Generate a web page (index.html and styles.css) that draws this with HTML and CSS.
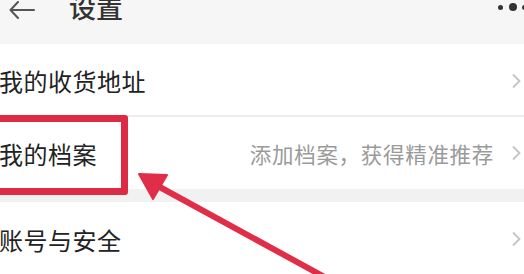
FILE: index.html
```html
<!DOCTYPE html>
<html lang="zh-CN">
<head>
    <meta charset="UTF-8">
    <meta name="viewport" content="width=device-width, initial-scale=1.0">
    <title>设置</title>
    <link rel="stylesheet" href="styles.css">
</head>
<body>
    <!-- top bar -->
    <div class="top-bar">
        <svg class="back" width="26" height="18" viewBox="0 0 26 18">
            <polyline points="9,1 1.5,9 9,17" fill="none" stroke="#555" stroke-width="2" stroke-linecap="round" stroke-linejoin="round"/>
            <line x1="2" y1="9" x2="25" y2="9" stroke="#555" stroke-width="2" stroke-linecap="round"/>
        </svg>
        <div class="title">设置</div>
        <div class="more">
            <span class="dot small"></span>
            <span class="dot big"></span>
            <span class="dot small"></span>
        </div>
    </div>

    <div class="list">
        <div class="row row-first">
            <div class="label">我的收货地址</div>
            <div class="right">
                <svg class="chev" width="10" height="16" viewBox="0 0 10 16"><polyline points="2,1.5 8.5,8 2,14.5" fill="none" stroke="#c4c4c4" stroke-width="1.8"/></svg>
            </div>
        </div>
        <div class="row row-second">
            <div class="label">我的档案</div>
            <div class="right">
                <span class="hint">添加档案，获得精准推荐</span>
                <svg class="chev" width="10" height="16" viewBox="0 0 10 16"><polyline points="2,1.5 8.5,8 2,14.5" fill="none" stroke="#c4c4c4" stroke-width="1.8"/></svg>
            </div>
        </div>
        <div class="gap-band"></div>
        <div class="row row-third">
            <div class="label">账号与安全</div>
            <div class="right">
                <svg class="chev" width="10" height="16" viewBox="0 0 10 16"><polyline points="2,1.5 8.5,8 2,14.5" fill="none" stroke="#c4c4c4" stroke-width="1.8"/></svg>
            </div>
        </div>
    </div>

    <!-- annotation marks -->
    <div class="mark-box"></div>
    <svg class="mark-arrow" width="524" height="274" viewBox="0 0 524 274">
        <line x1="156" y1="185" x2="330" y2="280" stroke="#e02d48" stroke-width="6" stroke-linecap="round"/>
        <polygon points="139,174 167,175 153,199" fill="#e02d48" stroke="#e02d48" stroke-width="2" stroke-linejoin="round"/>
    </svg>
</body>
</html>
```

FILE: styles.css
```css
html, body {
    margin: 0;
    padding: 0;
    height: 100%;
    overflow: hidden;
    background-color: #fff;
    font-family: "Noto Sans CJK SC", "Noto Sans", sans-serif;
}

body {
    position: relative;
}

.top-bar {
    height: 44px;
    background-color: #f6f6f6;
    display: flex;
    align-items: flex-start;
    overflow: hidden;
}

.back {
    margin-top: 1px;
    margin-left: 9px;
}

.title {
    margin-left: 34px;
    margin-top: -13px;
    font-size: 27px;
    font-weight: 500;
    line-height: 40px;
    color: #333;
}

.more {
    margin-left: auto;
    margin-right: -3px;
    margin-top: 3px;
    display: flex;
    align-items: center;
    gap: 5.5px;
    height: 8px;
}

.dot {
    display: block;
    flex-shrink: 0;
    border-radius: 50%;
    background-color: #333;
}

.dot.small {
    width: 5px;
    height: 5px;
}

.dot.big {
    width: 8px;
    height: 8px;
}

.list {
    display: flex;
    flex-direction: column;
}

.row {
    display: flex;
    align-items: center;
    justify-content: space-between;
    background-color: #fff;
}

.row-first {
    height: 69px;
    border-bottom: 2px solid #ececec;
    padding-top: 2px;
}

.row-second {
    height: 72px;
}

.row-third {
    height: 74px;
}

.gap-band {
    height: 13px;
    background-color: #f1f1f1;
}

.label {
    font-size: 24px;
    color: #222;
    margin-left: -1px;
    letter-spacing: 0.5px;
}

.right {
    display: flex;
    align-items: center;
    margin-right: 3px;
}

.hint {
    font-size: 21.5px;
    color: #9a9a9a;
    margin-right: 17px;
    letter-spacing: 0.7px;
}

.chev {
    display: block;
}

.mark-box {
    position: absolute;
    left: -10px;
    top: 115px;
    width: 124px;
    height: 66px;
    border: 7px solid #dd2b45;
    border-radius: 3px;
}

.mark-arrow {
    position: absolute;
    left: 0;
    top: 0;
}
```
